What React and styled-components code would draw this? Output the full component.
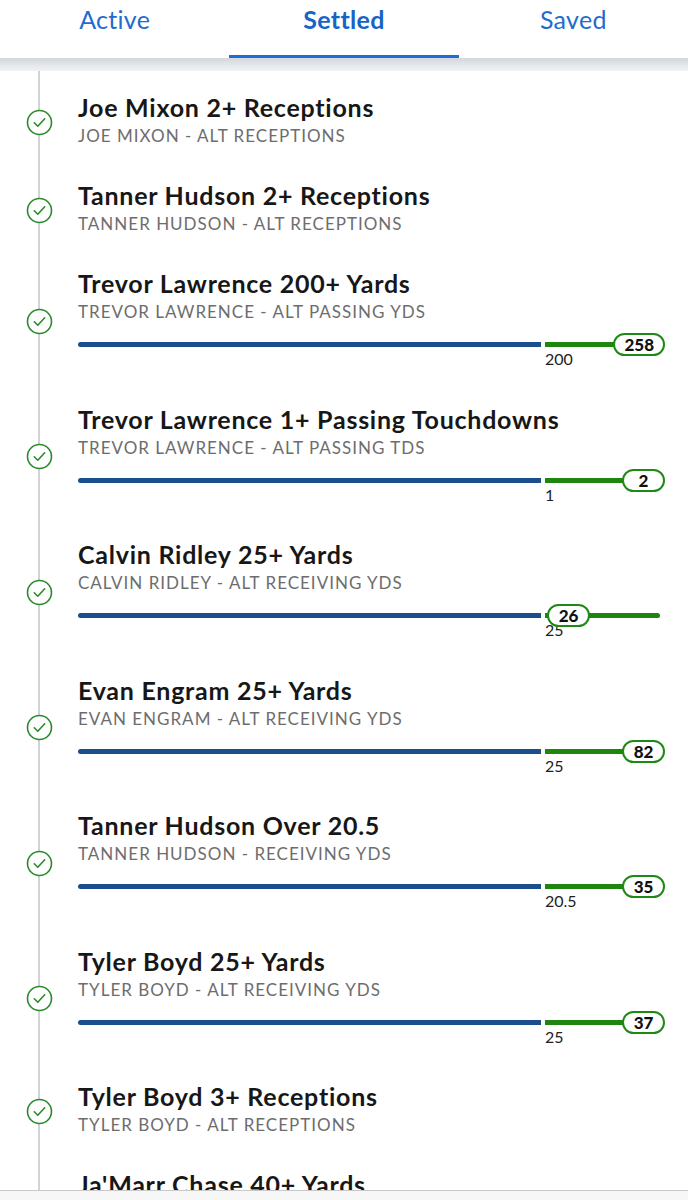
import styled, { createGlobalStyle } from 'styled-components'

const GlobalStyle = createGlobalStyle`
  html, body {
    margin: 0;
    padding: 0;
    background: #ffffff;
  }
  body {
    font-family: 'Lato', 'Liberation Sans', sans-serif;
    color: #1a1a1a;
    -webkit-font-smoothing: antialiased;
  }
`

const Screen = styled.div`
  width: 688px;
  height: 1200px;
  display: flex;
  flex-direction: column;
  overflow: hidden;
  background: #fff;
`

const Tabs = styled.nav`
  display: grid;
  grid-template-columns: repeat(3, 1fr);
  height: 58px;
  flex-shrink: 0;
  background: #fff;
`

const Tab = styled.div`
  display: flex;
  align-items: flex-start;
  justify-content: center;
  padding-top: 4px;
  font-size: 25px;
  letter-spacing: 0.3px;
  font-weight: ${(p) => (p.$active ? 700 : 400)};
  color: ${(p) => (p.$active ? '#1565c6' : '#1f6ccb')};
  border-bottom: 3px solid ${(p) => (p.$active ? '#1a6dd8' : 'transparent')};
`

const Shade = styled.div`
  height: 13px;
  flex-shrink: 0;
  background: linear-gradient(#d3d6db, #e9ebee 70%, #f1f2f4);
`

const List = styled.div`
  flex: 1;
  overflow: hidden;
`

const Row = styled.div`
  display: grid;
  grid-template-columns: 78px 1fr;
  padding: 22px 28px ${(p) => (p.$bar ? '15.5px' : '13px')} 0;
  background: linear-gradient(#d0d4d9, #d0d4d9) 38px 0 / 2px 100% no-repeat;
`

const Mark = styled.div`
  display: flex;
  align-items: center;
  justify-content: center;
  padding-left: 1px;
  transform: translateY(3px);
`

const Body = styled.div`
  display: flex;
  flex-direction: column;
  min-width: 0;
`

const Title = styled.div`
  font-size: 25px;
  line-height: 28px;
  font-weight: 700;
  letter-spacing: 0.75px;
  color: #171717;
  white-space: nowrap;
`

const Sub = styled.div`
  margin-top: 5px;
  font-size: 17px;
  line-height: 20px;
  letter-spacing: 1px;
  color: #6d6d6d;
  text-transform: uppercase;
  white-space: nowrap;
`

const Progress = styled.div`
  margin-top: 20px;
  display: flex;
  gap: 4px;
`

const Blue = styled.div`
  width: 463px;
  height: 5px;
  border-radius: 3px 0 0 3px;
  background: #1c4e8e;
`

const GreenCol = styled.div`
  flex: 1;
  position: relative;
  display: flex;
  flex-direction: column;
`

const Green = styled.div`
  height: 5px;
  border-radius: 0 3px 3px 0;
  background: #1e860f;
`

const Line = styled.div`
  margin-top: 4px;
  font-size: 16px;
  line-height: 16px;
  color: #222;
`

const Badge = styled.div`
  position: absolute;
  top: -9px;
  height: 23px;
  min-width: 43px;
  box-sizing: border-box;
  padding: 0 9px;
  display: flex;
  align-items: center;
  justify-content: center;
  border: 2px solid #1f8a13;
  border-radius: 12px;
  background: #fff;
  font-size: 17px;
  font-weight: 900;
  color: #111;
  ${(p) => (p.$end ? 'right: -5px;' : 'left: 2px;')}
`

const Footer = styled.div`
  height: 9px;
  flex-shrink: 0;
  border-top: 1px solid #c9c9c9;
  background: #f7f7f7;
`

function CheckIcon() {
  return (
    <svg width="27" height="27" viewBox="0 0 27 27">
      <circle cx="13.5" cy="13.5" r="12" fill="#fff" stroke="#2a8a2a" strokeWidth="1.6" />
      <path
        d="M8.3 13.8 L11.8 17.2 L18.7 9.8"
        fill="none"
        stroke="#2a8a2a"
        strokeWidth="1.6"
        strokeLinecap="round"
        strokeLinejoin="round"
      />
    </svg>
  )
}

const bets = [
  { title: 'Joe Mixon 2+ Receptions', sub: 'Joe Mixon - Alt Receptions' },
  { title: 'Tanner Hudson 2+ Receptions', sub: 'Tanner Hudson - Alt Receptions' },
  { title: 'Trevor Lawrence 200+ Yards', sub: 'Trevor Lawrence - Alt Passing Yds', line: '200', value: '258', end: true },
  { title: 'Trevor Lawrence 1+ Passing Touchdowns', sub: 'Trevor Lawrence - Alt Passing TDs', line: '1', value: '2', end: true },
  { title: 'Calvin Ridley 25+ Yards', sub: 'Calvin Ridley - Alt Receiving Yds', line: '25', value: '26', end: false },
  { title: 'Evan Engram 25+ Yards', sub: 'Evan Engram - Alt Receiving Yds', line: '25', value: '82', end: true },
  { title: 'Tanner Hudson Over 20.5', sub: 'Tanner Hudson - Receiving Yds', line: '20.5', value: '35', end: true },
  { title: 'Tyler Boyd 25+ Yards', sub: 'Tyler Boyd - Alt Receiving Yds', line: '25', value: '37', end: true },
  { title: 'Tyler Boyd 3+ Receptions', sub: 'Tyler Boyd - Alt Receptions' },
  { title: "Ja'Marr Chase 40+ Yards", sub: "Ja'Marr Chase - Alt Receiving Yds", line: '40', value: '61', end: true },
]

function BetRow({ bet }) {
  const hasBar = bet.line !== undefined
  return (
    <Row $bar={hasBar}>
      <Mark>
        <CheckIcon />
      </Mark>
      <Body>
        <Title>{bet.title}</Title>
        <Sub>{bet.sub}</Sub>
        {hasBar && (
          <Progress>
            <Blue />
            <GreenCol>
              <Green />
              <Line>{bet.line}</Line>
              <Badge $end={bet.end}>{bet.value}</Badge>
            </GreenCol>
          </Progress>
        )}
      </Body>
    </Row>
  )
}

export default function App() {
  return (
    <>
      <GlobalStyle />
      <Screen>
        <Tabs>
          <Tab>Active</Tab>
          <Tab $active>Settled</Tab>
          <Tab>Saved</Tab>
        </Tabs>
        <Shade />
        <List>
          {bets.map((bet) => (
            <BetRow key={bet.title} bet={bet} />
          ))}
        </List>
        <Footer />
      </Screen>
    </>
  )
}
